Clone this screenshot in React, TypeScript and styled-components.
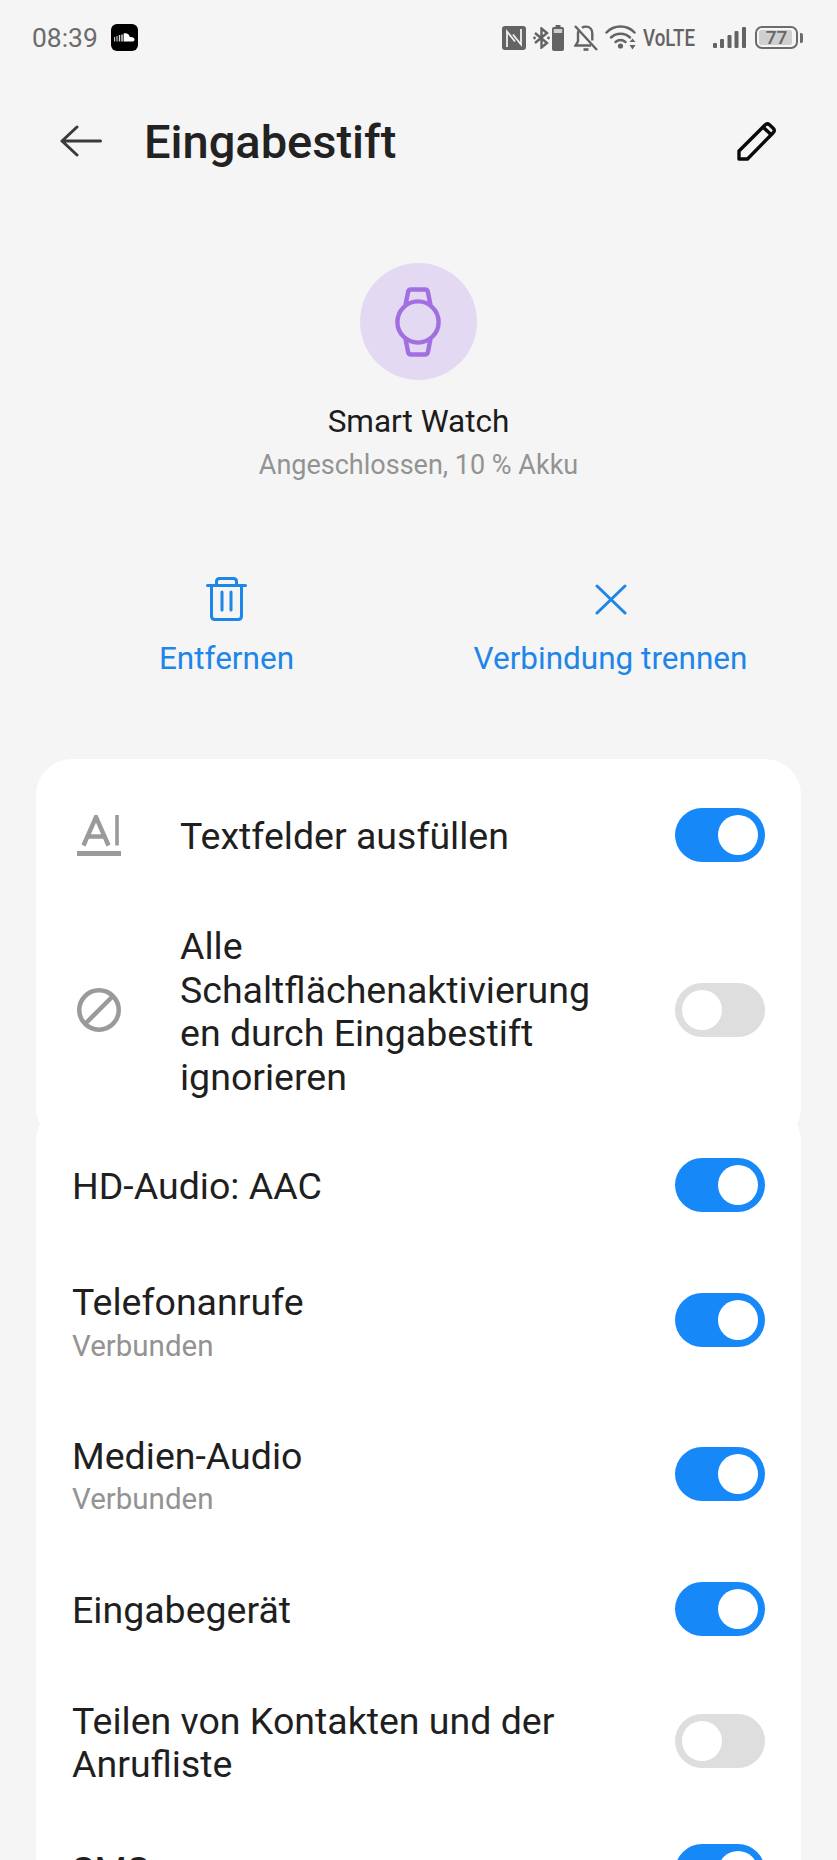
import React from "react";
import styled, { createGlobalStyle } from "styled-components";

const Global = createGlobalStyle`
  html, body { margin: 0; padding: 0; background: #f5f5f5; }
  body { font-family: Roboto, "Liberation Sans", sans-serif; }
  #root { width: 837px; height: 1860px; overflow: hidden; }
`;

const Page = styled.div`
  width: 837px;
  height: 1860px;
  overflow: hidden;
  background: #f5f5f5;
  display: flex;
  flex-direction: column;
`;

const StatusBar = styled.div`
  height: 76px;
  flex: none;
  display: flex;
  align-items: flex-start;
  justify-content: space-between;
  padding: 24px 34px 0 32px;
  box-sizing: border-box;
`;
const StatusLeft = styled.div`
  display: flex;
  align-items: center;
  gap: 13px;
  height: 27px;
`;
const Time = styled.span`
  padding-top: 2px;
  font-size: 26.4px;
  line-height: 27px;
  color: #6b6b6b;
`;
const StatusRight = styled.div`
  display: flex;
  align-items: center;
  height: 27px;
  color: #636363;
`;
const Volte = styled.span`
  flex: none;
  width: 52px;
  margin: 0 18px 0 7px;
  font-size: 24px;
  font-weight: 500;
  line-height: 24px;
  white-space: nowrap;
  transform: scaleX(0.78);
  transform-origin: left center;
`;
const BatteryBox = styled.div`
  position: relative;
  width: 43px;
  height: 23px;
  margin-left: 9px;
  box-sizing: border-box;
  border: 2px solid #6b6b6b;
  border-radius: 7px;
  display: flex;
  align-items: center;
  justify-content: center;
  overflow: hidden;
`;
const BatteryFill = styled.div`
  position: absolute;
  left: 2px;
  top: 2px;
  bottom: 2px;
  width: 85%;
  background: #cfcfcf;
  border-radius: 2px;
`;
const BatteryText = styled.span`
  position: relative;
  font-size: 19px;
  font-weight: 500;
  line-height: 19px;
  color: #666;
`;
const BatteryTip = styled.div`
  width: 3px;
  height: 10px;
  margin-left: 2px;
  background: #6b6b6b;
  border-radius: 0 2px 2px 0;
`;

const Header = styled.header`
  height: 130px;
  flex: none;
  display: flex;
  align-items: center;
  padding: 0 60px;
`;
const Title = styled.h1`
  margin: 0 0 0 42px;
  padding-top: 1px;
  flex: 1;
  font-size: 47px;
  font-weight: 500;
  line-height: 62px;
  color: #222;
`;

const Device = styled.section`
  flex: none;
  display: flex;
  flex-direction: column;
  align-items: center;
`;
const Avatar = styled.div`
  margin-top: 57px;
  width: 117px;
  height: 117px;
  border-radius: 50%;
  background: #e4d9f2;
  display: flex;
  align-items: center;
  justify-content: center;
  padding-right: 2px;
  box-sizing: border-box;
`;
const DeviceName = styled.div`
  margin-top: 24px;
  font-size: 31.5px;
  line-height: 36px;
  color: #1c1c1c;
`;
const DeviceStatus = styled.div`
  margin-top: 8px;
  font-size: 27px;
  line-height: 34px;
  color: #939393;
`;

const Actions = styled.div`
  flex: none;
  margin-top: 94px;
  display: flex;
  height: 125px;
`;
const Action = styled.div<{ $w: number }>`
  width: ${(p) => p.$w}px;
  display: flex;
  flex-direction: column;
  align-items: center;
`;
const ActionIcon = styled.div`
  height: 46px;
  display: flex;
  align-items: center;
  justify-content: center;
`;
const ActionLabel = styled.div`
  margin-top: 19px;
  font-size: 31.5px;
  line-height: 36px;
  color: #1e86e8;
  white-space: nowrap;
`;

const Card = styled.div`
  flex: none;
  margin: 0 36px;
  background: #fff;
  border-radius: 36px;
`;
const FirstCard = styled(Card)`
  margin-top: 58px;
  padding: 31px 0 4px;
`;
const SecondCard = styled(Card)`
  margin-top: -39px;
  padding-top: 25px;
`;

const Row = styled.div<{ $h: number }>`
  height: ${(p) => p.$h}px;
  display: flex;
  align-items: center;
  padding: 0 36px;
`;
const LeadIcon = styled.div`
  width: 44px;
  margin-left: 5px;
  margin-right: 59px;
  flex: none;
  display: flex;
  justify-content: center;
`;
const Label = styled.div<{ $flush?: boolean }>`
  padding-top: ${(p) => (p.$flush ? 0 : 4)}px;
  font-size: 37.5px;
  line-height: 43.5px;
  color: #1f1f1f;
  white-space: nowrap;
`;
const Spacer = styled.div`
  flex: 1;
`;
const Sub = styled.div`
  margin-top: 4px;
  font-size: 29.5px;
  line-height: 34px;
  color: #939393;
`;
const Track = styled.div<{ $on: boolean }>`
  flex: none;
  width: 90px;
  height: 54px;
  border-radius: 27px;
  box-sizing: border-box;
  padding: 7px;
  display: flex;
  justify-content: ${(p) => (p.$on ? "flex-end" : "flex-start")};
  background: ${(p) => (p.$on ? "#1688f8" : "#dedede")};
`;
const Knob = styled.div`
  width: 40px;
  height: 40px;
  border-radius: 50%;
  background: #fff;
`;

const Toggle = ({ on }: { on: boolean }) => (
  <Track $on={on}>
    <Knob />
  </Track>
);

const Soundcloud = () => (
  <svg width="27" height="27" viewBox="0 0 27 27">
    <rect width="27" height="27" rx="6" fill="#000" />
    <g fill="#fff">
      <rect x="3" y="13" width="1.2" height="4.5" opacity=".75" />
      <rect x="5.4" y="12" width="1.2" height="5.5" opacity=".75" />
      <rect x="7.8" y="11" width="1.4" height="6.5" opacity=".85" />
      <rect x="10.3" y="10.5" width="1.4" height="7" opacity=".9" />
      <path d="M12.6 9.6c3-.9 5.6.6 6.3 3.4 2.4-.5 4.6.8 4.6 2.4 0 1.3-1 2.1-2.4 2.1h-8.5z" />
    </g>
  </svg>
);

const StatusIcons = () => (
  <>
    <svg width="24" height="24" viewBox="0 0 24 24">
      <rect width="24" height="24" rx="3" fill="#636363" />
      <path d="M5 21V5.500l8 10M19 3v15.500l-8-10" stroke="#f0f0f0" strokeWidth="1.8" fill="none" />
    </svg>
    <svg style={{ marginLeft: 7 }} width="17" height="22" viewBox="0 0 17 22" fill="none" stroke="#636363" strokeWidth="2.4">
      <path d="M2 6l12 10-5.500 4.500V1.500L14 6 2 16" />
      <circle cx="1.5" cy="11" r="1.4" fill="#636363" stroke="none" />
      <circle cx="15.5" cy="11" r="1.4" fill="#636363" stroke="none" />
    </svg>
    <svg style={{ marginLeft: 2 }} width="12" height="26" viewBox="0 0 12 26">
      <rect x="3.5" y="0" width="5" height="3" fill="#636363" />
      <rect x="0" y="2" width="12" height="24" rx="2" fill="#636363" />
      <rect x="1.8" y="4" width="8.4" height="4" fill="#cfcfcf" />
    </svg>
    <svg style={{ marginLeft: 10 }} width="24" height="26" viewBox="0 0 24 26" fill="none" stroke="#636363" strokeWidth="2.4">
      <path d="M4.500 6c-.3.8-.5 1.600-.5 2.500v8L1.500 20.500h15.500M8 2.800C9 2 10.200 1.600 12 1.600c3.800 0 6.300 2.900 6.300 6.800v7" />
      <path d="M1 1l22 24" />
      <path d="M9.5 24.5h5" strokeWidth="2.6" />
    </svg>
    <svg style={{ marginLeft: 7 }} width="31" height="25" viewBox="0 0 31 25" fill="none" stroke="#636363" strokeWidth="2.5" strokeLinecap="round">
      <path d="M1.5 7.5C9-.5 22-.5 29.5 7.5" />
      <path d="M6 12.5c5.300-5 13.700-5 19 0" />
      <path d="M10.5 17c3-2.400 7-2.400 10 0" />
      <circle cx="15.5" cy="21" r="2.6" fill="#636363" stroke="none" />
      <path d="M24.5 17h6l-3-3.400zM24.5 20h6l-3 4.400z" fill="#636363" stroke="none" />
    </svg>
    <Volte>VoLTE</Volte>
    <svg width="33" height="21" viewBox="0 0 33 21" fill="#636363">
      <rect x="0" y="16" width="4" height="5" rx="1" />
      <rect x="7" y="12" width="4" height="9" rx="1" />
      <rect x="14.5" y="8" width="4" height="13" rx="1" />
      <rect x="21.5" y="4" width="4" height="17" rx="1" />
      <rect x="29" y="0" width="4" height="21" rx="1" />
    </svg>
    <BatteryBox>
      <BatteryFill />
      <BatteryText>77</BatteryText>
    </BatteryBox>
    <BatteryTip />
  </>
);

const Back = () => (
  <svg width="42" height="32" viewBox="0 0 42 32" fill="none" stroke="#3a3a3a" strokeWidth="3" strokeLinecap="round" strokeLinejoin="round">
    <path d="M40.5 16H2M17 2 2 16l15 14" />
  </svg>
);

const Pencil = () => (
  <svg width="40" height="40" viewBox="0 0 40 40" fill="none" stroke="#0a0a0a" strokeWidth="3.4" strokeLinejoin="round">
    <path d="M2 30 28 4c1.500-1.500 3-1.500 4.500-.2l3.700 3.400c1.400 1.400 1.400 3 0 4.500L10.500 38H2z" />
    <path d="M26 6l8 7.600" />
  </svg>
);

const WatchIcon = () => (
  <svg width="46" height="70" viewBox="0 0 46 70" fill="none" stroke="#a26fe0" strokeWidth="4.4" strokeLinejoin="round">
    <circle cx="23" cy="35" r="20.6" />
    <path d="M10.500 18 13 5.500c.2-1.800 1.300-3 3-3h14c1.700 0 2.800 1.200 3 3l2.500 12.500" />
    <path d="M10.500 52 13 64.500c.2 1.800 1.300 3 3 3h14c1.700 0 2.800-1.200 3-3l2.500-12.500" />
  </svg>
);

const Trash = () => (
  <svg width="41" height="44" viewBox="0 0 41 44" fill="none" stroke="#1e86e8" strokeWidth="3" strokeLinecap="round" strokeLinejoin="round">
    <path d="M1.5 8.5h38" />
    <path d="M10.500 8V4.500c0-2 1-3 3-3h14c2 0 3 1 3 3V8" />
    <path d="M5.500 9v30c0 2.500 1.500 3.500 3.500 3.500h23c2 0 3.500-1 3.500-3.500V9" />
    <path d="M16 15v18M25 15v18" />
  </svg>
);

const Cross = () => (
  <svg width="32" height="31" viewBox="0 0 32 31" fill="none" stroke="#1e86e8" strokeWidth="3" strokeLinecap="round">
    <path d="M2 2 30 29M30 2 2 29" />
  </svg>
);

const TextFill = () => (
  <svg width="44" height="41" viewBox="0 0 44 41" fill="none" stroke="#9a9a9a">
    <path d="M6.500 30.500 19 2l12.500 28.500M11 21.500h16" strokeWidth="4.4" />
    <path d="M40 0v30.500" strokeWidth="3.6" />
    <path d="M0 38.500h44" strokeWidth="5" />
  </svg>
);

const Block = () => (
  <svg width="44" height="44" viewBox="0 0 44 44" fill="none" stroke="#9a9a9a" strokeWidth="4.5">
    <circle cx="22" cy="22" r="19.75" />
    <path d="M9 35 35 9" />
  </svg>
);

export default function App() {
  return (
    <Page>
      <Global />
      <StatusBar>
        <StatusLeft>
          <Time>08:39</Time>
          <Soundcloud />
        </StatusLeft>
        <StatusRight>
          <StatusIcons />
        </StatusRight>
      </StatusBar>
      <Header>
        <Back />
        <Title>Eingabestift</Title>
        <Pencil />
      </Header>
      <Device>
        <Avatar>
          <WatchIcon />
        </Avatar>
        <DeviceName>Smart Watch</DeviceName>
        <DeviceStatus>Angeschlossen, 10 % Akku</DeviceStatus>
      </Device>
      <Actions>
        <Action $w={453}>
          <ActionIcon>
            <Trash />
          </ActionIcon>
          <ActionLabel>Entfernen</ActionLabel>
        </Action>
        <Action $w={315}>
          <ActionIcon>
            <Cross />
          </ActionIcon>
          <ActionLabel>Verbindung trennen</ActionLabel>
        </Action>
      </Actions>
      <FirstCard>
        <Row $h={90}>
          <LeadIcon>
            <TextFill />
          </LeadIcon>
          <Label>Textfelder ausfüllen</Label>
          <Spacer />
          <Toggle on />
        </Row>
        <Row $h={260}>
          <LeadIcon>
            <Block />
          </LeadIcon>
          <Label>
            Alle
            <br />
            Schaltflächenaktivierung
            <br />
            en durch Eingabestift
            <br />
            ignorieren
          </Label>
          <Spacer />
          <Toggle on={false} />
        </Row>
      </FirstCard>
      <SecondCard>
        <Row $h={110}>
          <Label>HD-Audio: AAC</Label>
          <Spacer />
          <Toggle on />
        </Row>
        <Row $h={160}>
          <div>
            <Label>Telefonanrufe</Label>
            <Sub>Verbunden</Sub>
          </div>
          <Spacer />
          <Toggle on />
        </Row>
        <Row $h={147}>
          <div>
            <Label>Medien-Audio</Label>
            <Sub>Verbunden</Sub>
          </div>
          <Spacer />
          <Toggle on />
        </Row>
        <Row $h={124}>
          <Label>Eingabegerät</Label>
          <Spacer />
          <Toggle on />
        </Row>
        <Row $h={140}>
          <Label>
            Teilen von Kontakten und der
            <br />
            Anrufliste
          </Label>
          <Spacer />
          <Toggle on={false} />
        </Row>
        <Row $h={120}>
          <Label $flush>SMS</Label>
          <Spacer />
          <Toggle on />
        </Row>
      </SecondCard>
    </Page>
  );
}
